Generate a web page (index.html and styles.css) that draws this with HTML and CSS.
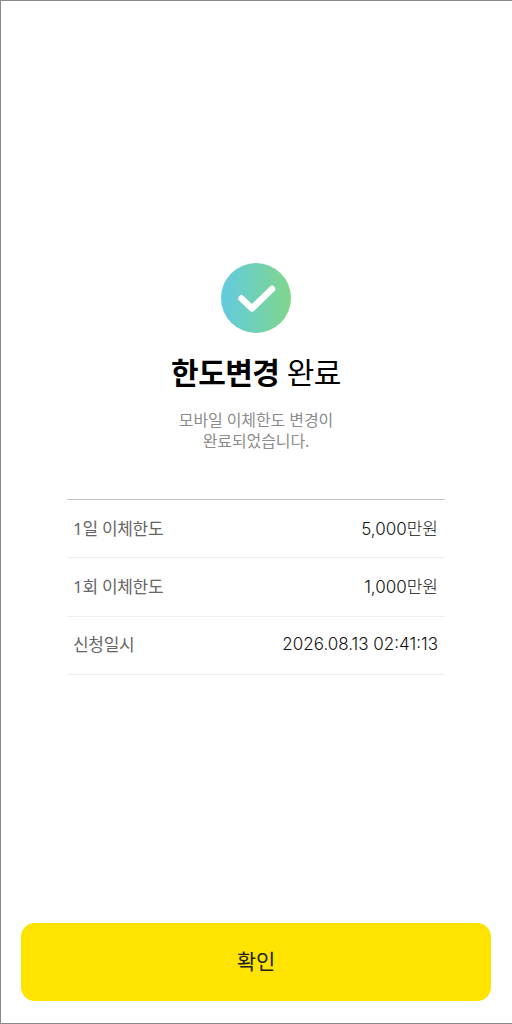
FILE: index.html
```html
<!DOCTYPE html>
<html lang="ko">
<head>
<meta charset="utf-8">
<title>한도변경 완료</title>
<link rel="stylesheet" href="styles.css">
</head>
<body>
<main class="screen">
  <section class="result">
    <svg class="check" width="70" height="70" viewBox="0 0 70 70" aria-hidden="true">
      <defs>
        <linearGradient id="grad" x1="0" y1="0" x2="1" y2="0">
          <stop offset="0" stop-color="#62cbe0"/>
          <stop offset="1" stop-color="#80d68a"/>
        </linearGradient>
      </defs>
      <circle cx="35" cy="35" r="35" fill="url(#grad)"/>
      <path d="M20.5 35.5 L31 45.5 L51 26" fill="none" stroke="#fff" stroke-width="6.5" stroke-linecap="round" stroke-linejoin="round"/>
    </svg>
    <h1 class="title"><strong>한도변경</strong> 완료</h1>
    <p class="desc">모바일 이체한도 변경이<br>완료되었습니다.</p>
  </section>
  <dl class="info">
    <div class="row"><dt>1일 이체한도</dt><dd>5,000만원</dd></div>
    <div class="row"><dt>1회 이체한도</dt><dd>1,000만원</dd></div>
    <div class="row"><dt>신청일시</dt><dd>2026.08.13 02:41:13</dd></div>
  </dl>
  <button class="confirm" type="button">확인</button>
</main>
</body>
</html>
```
FILE: styles.css
```css
* { box-sizing: border-box; }
html, body { margin: 0; padding: 0; background: #fff; }
body {
  font-family: "Noto Sans", "Noto Sans CJK KR", sans-serif;
  color: #222;
}
.screen {
  width: 512px;
  height: 1024px;
  border-top: 1px solid #8a8a8a;
  border-left: 1px solid #8a8a8a;
  border-bottom: 1px solid #8a8a8a;
  display: flex;
  flex-direction: column;
  align-items: center;
  padding-top: 262px;
  padding-right: 1px;
}
.result { display: flex; flex-direction: column; align-items: center; }
.check { display: block; }
.title {
  margin: 18px 0 0;
  font-size: 30px;
  line-height: 44px;
  font-weight: 400;
  letter-spacing: -0.5px;
  color: #000;
}
.title strong { font-weight: 700; }
.desc {
  margin: 15px 0 0;
  font-size: 16px;
  line-height: 21px;
  letter-spacing: -0.1px;
  color: #8c8c8c;
  text-align: center;
}
.info {
  width: 378px;
  margin: 47px 0 0;
  border-top: 1px solid #c4c4c4;
}
.row {
  height: 58.33px;
  display: flex;
  justify-content: space-between;
  align-items: center;
  padding: 0 7px 3px 6px;
  border-bottom: 1px solid #eeeeee;
}
.row dt { font-size: 17px; letter-spacing: -0.3px; color: #666; }
.row dd {
  margin: 0;
  font-family: Inter, "Noto Sans CJK KR", sans-serif;
  font-size: 17px;
  font-weight: 300;
  color: #111;
}
.confirm {
  width: 470px;
  height: 78px;
  margin-top: auto;
  margin-bottom: 22px;
  padding: 0 0 4px;
  border: 0;
  border-radius: 14px;
  background: #ffe400;
  font-family: inherit;
  font-size: 21px;
  color: #222;
}
```
